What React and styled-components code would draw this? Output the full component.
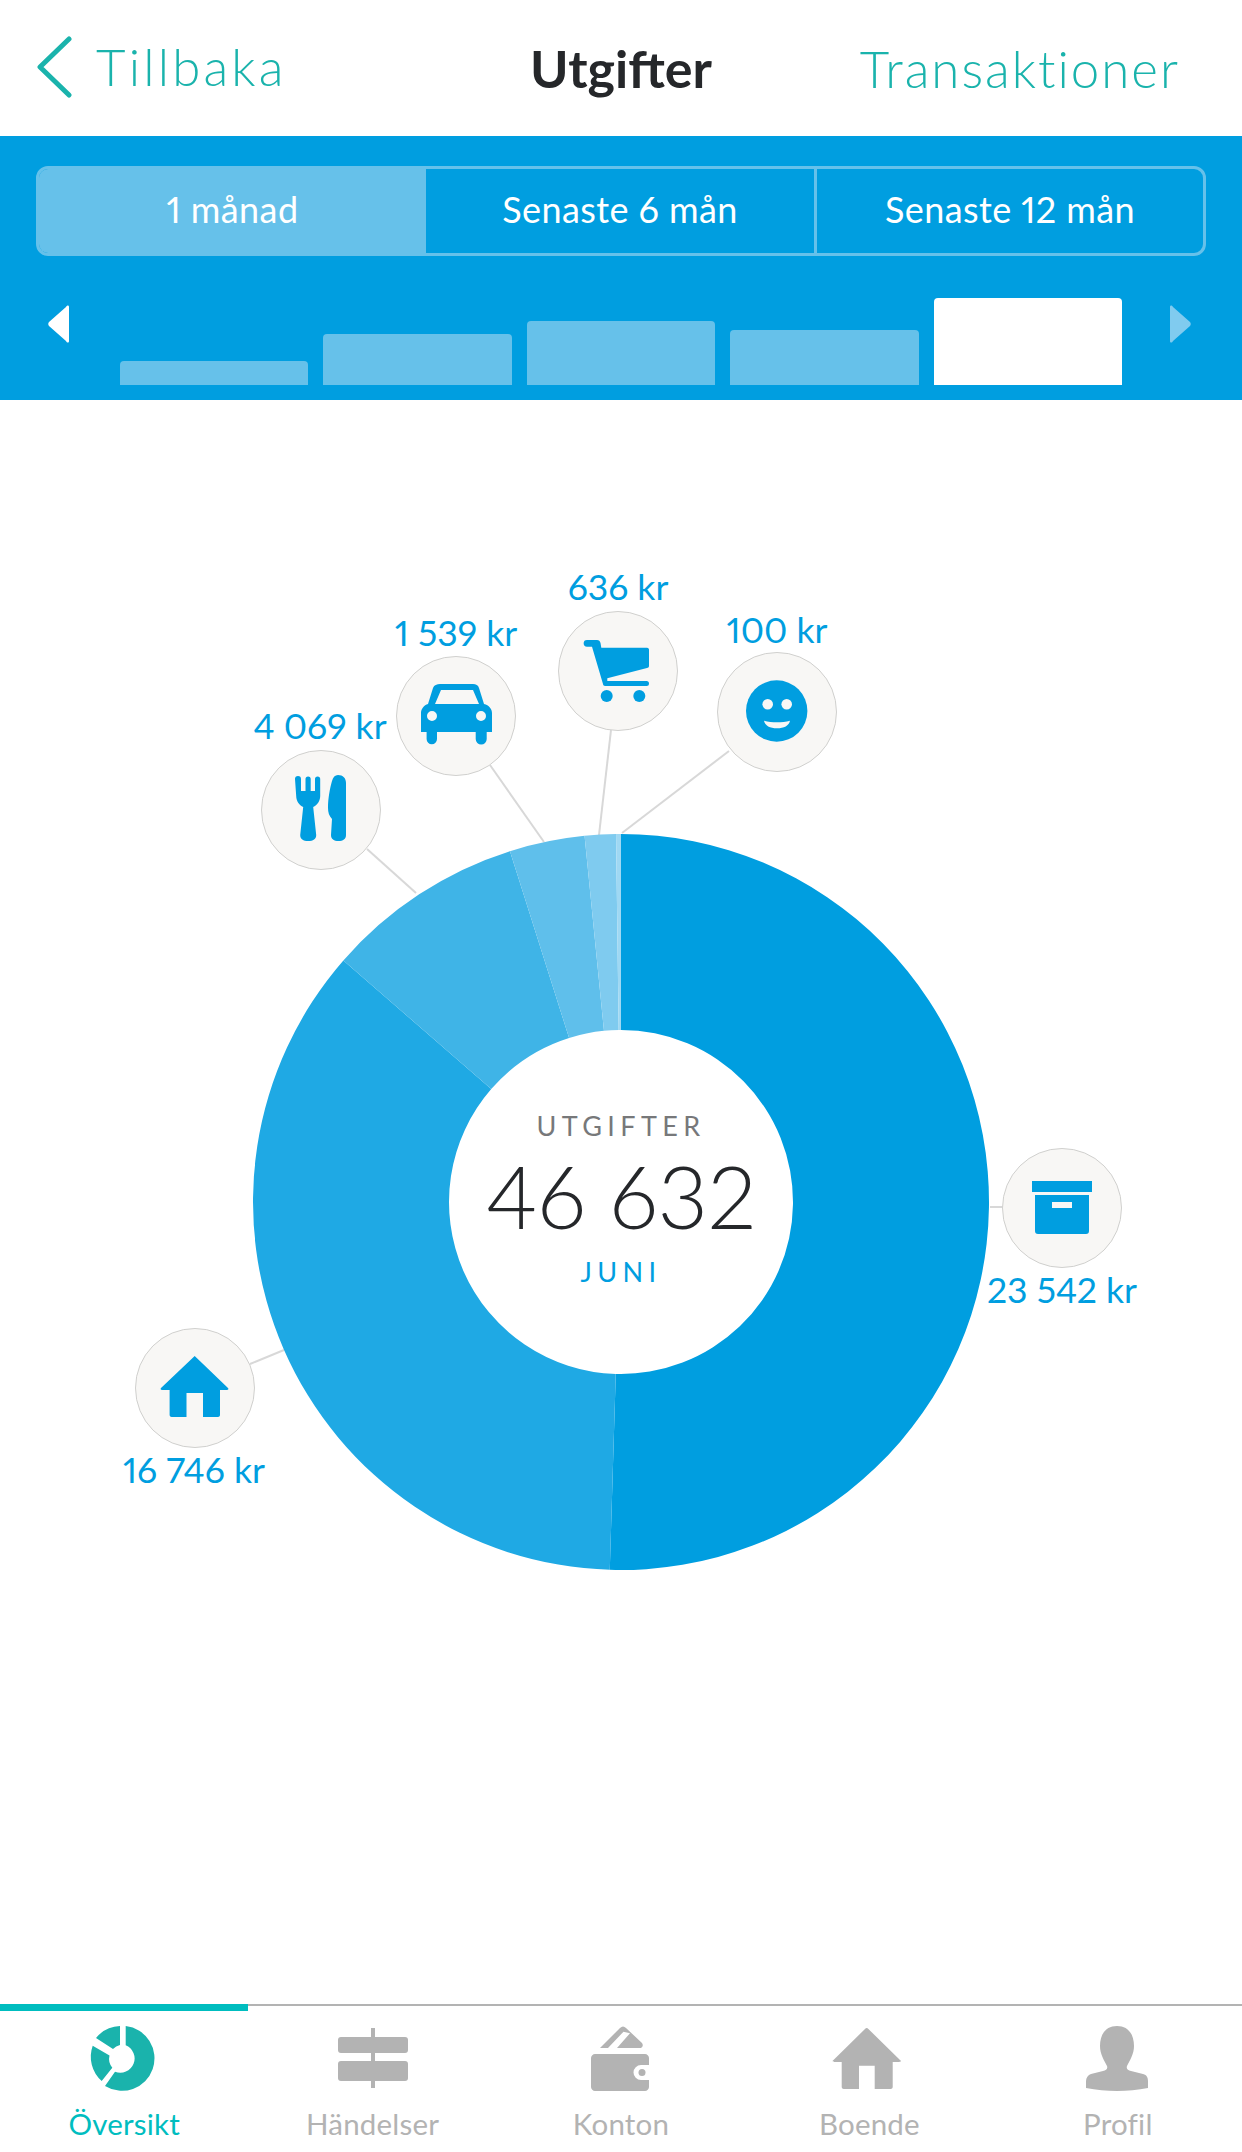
import React from "react";
import styled, { createGlobalStyle } from "styled-components";

const BLUE = "#009ee0";
const TEAL = "#1ab3ac";
const GREY = "#b3b3b3";
const FONT = `Lato, "Open Sans", sans-serif`;

const GlobalStyle = createGlobalStyle`
  html, body { margin: 0; padding: 0; background: #fff; }
  body { font-family: ${FONT}; font-variant-numeric: proportional-nums; }
`;

const Page = styled.div`
  width: 1242px;
  height: 2152px;
  display: flex;
  flex-direction: column;
  overflow: hidden;
  background: #fff;
`;

const Header = styled.header`
  height: 136px;
  display: grid;
  grid-template-columns: 1fr auto 1fr;
  align-items: center;
  padding: 0 36px;
  box-sizing: border-box;
`;
const Back = styled.div`
  display: flex;
  align-items: center;
  gap: 24px;
  color: ${TEAL};
  font-size: 51px;
  font-weight: 300;
  letter-spacing: 3.2px;
  line-height: 60px;
  padding-bottom: 2px;
`;
const Title = styled.div`
  font-size: 52px;
  font-weight: 700;
  color: #25272a;
`;
const HeaderLink = styled.div`
  justify-self: end;
  margin-right: 26px;
  color: ${TEAL};
  font-size: 51px;
  font-weight: 300;
  letter-spacing: 2px;
`;

const Band = styled.section`
  height: 264px;
  background: ${BLUE};
  padding: 30px 36px 15px;
  box-sizing: border-box;
  display: flex;
  flex-direction: column;
  justify-content: space-between;
`;
const Segments = styled.div`
  display: grid;
  grid-template-columns: 387px 388px 1fr;
  height: 90px;
  border: 3px solid #66c1ea;
  border-radius: 12px;
  overflow: hidden;
  box-sizing: border-box;
`;
const Segment = styled.div`
  display: flex;
  align-items: center;
  justify-content: center;
  padding-bottom: 5px;
  color: #fff;
  font-size: 36px;
  letter-spacing: 0.4px;
  background: ${(p) => (p.$active ? "#66c1ea" : "transparent")};
  border-left: ${(p) => (p.$divider ? "3px solid #66c1ea" : "0")};
`;
const BarRow = styled.div`
  display: flex;
  align-items: flex-end;
  height: 87px;
  margin: 0 -36px;
  padding: 0 51px 0 48px;
  justify-content: space-between;
`;
const Arrow = styled.svg`
  width: 21px;
  height: 38px;
  align-self: flex-start;
  margin-top: 7px;
`;
const Bars = styled.div`
  display: flex;
  align-items: flex-end;
  gap: 15px;
  margin-left: 3px;
`;
const Bar = styled.div`
  width: 188.4px;
  border-radius: 4px 4px 0 0;
  background: ${(p) => (p.$active ? "#fff" : "#66c1ea")};
`;

const Chart = styled.main`
  position: relative;
  flex: 1;
`;
const ChartArt = styled.svg`
  position: absolute;
  inset: 0;
  width: 1242px;
  height: 1604px;
`;
const Centre = styled.div`
  position: absolute;
  left: 450px;
  top: 630px;
  width: 342px;
  height: 343px;
  display: flex;
  flex-direction: column;
  align-items: center;
`;
const CentreLabel = styled.div`
  margin-top: 80px;
  font-size: 27px;
  letter-spacing: 5.4px;
  color: #77787a;
  line-height: 32px;
`;
const CentreValue = styled.div`
  font-size: 87px;
  font-weight: 300;
  color: #25272a;
  line-height: 96px;
  margin-top: 6px;
`;
const CentreMonth = styled.div`
  font-size: 27px;
  letter-spacing: 5.4px;
  color: ${BLUE};
  line-height: 32px;
  margin-top: 12px;
`;

const Bubble = styled.div`
  position: absolute;
  left: ${(p) => p.$x - 60}px;
  top: ${(p) => p.$y - 60}px;
  width: 120px;
  height: 120px;
  box-sizing: border-box;
  border-radius: 50%;
  border: 1.5px solid #d0d0ce;
  background: #f8f7f5;
  display: flex;
  align-items: center;
  justify-content: center;
`;
const Amount = styled.div`
  position: absolute;
  left: ${(p) => p.$x - 120}px;
  top: ${(p) => p.$y - 22}px;
  width: 240px;
  text-align: center;
  font-size: 35.5px;
  line-height: 44px;
  color: ${BLUE};
  white-space: nowrap;
`;

const TabBar = styled.nav`
  height: 148px;
  border-top: 2px solid ${GREY};
  display: grid;
  grid-template-columns: repeat(5, 1fr);
  box-sizing: border-box;
`;
const Tab = styled.div`
  display: flex;
  flex-direction: column;
  align-items: center;
  margin-top: -2px;
  padding-top: 21px;
  position: relative;
  color: ${(p) => (p.$active ? "#00bdbf" : GREY)};
  font-size: 29.5px;
  letter-spacing: 0.2px;
  &::before {
    content: "";
    position: absolute;
    left: 0;
    right: 0;
    top: 0;
    height: ${(p) => (p.$active ? "7px" : "0")};
    background: #00bdbf;
  }
`;
const TabIcon = styled.svg`
  width: 80px;
  height: 68px;
  display: block;
`;
const TabLabel = styled.div`
  margin-top: 13px;
  line-height: 36px;
`;
const BubbleIcon = styled.svg`
  width: 80px;
  height: 80px;
  display: block;
`;

const polar = (r, a) => {
  const rad = ((a - 90) * Math.PI) / 180;
  return [621 + r * Math.cos(rad), 802 + r * Math.sin(rad)];
};

const slice = (from, to) => {
  const [x1, y1] = polar(368, from);
  const [x2, y2] = polar(368, to);
  const [x3, y3] = polar(172, to);
  const [x4, y4] = polar(172, from);
  const big = to - from > 180 ? 1 : 0;
  return `M${x1} ${y1}A368 368 0 ${big} 1 ${x2} ${y2}L${x3} ${y3}A172 172 0 ${big} 0 ${x4} ${y4}Z`;
};

const values = [
  [23542, "#009ee0"],
  [16746, "#1fa9e4"],
  [4069, "#3fb4e7"],
  [1539, "#5fbfeb"],
  [636, "#7fcbef"],
  [100, "#9fd8f3"],
];
const total = 46632;

const leaders = [
  [367, 449, 416, 493],
  [490, 365, 544, 442],
  [611, 330, 599, 435],
  [729, 351, 622, 433],
  [990, 807, 1003, 807],
  [250, 964, 284, 950],
];

const Fork = () => (
  <BubbleIcon viewBox="0 0 80 80" fill={BLUE}>
    <path d="M14 9a3 3 0 0 1 6 0V21h4.500V9a2.600 2.600 0 0 1 5.200 0V21H34V9a2.600 2.600 0 0 1 5.200 0V26c0 5-3 9-7 11l3 28c0 4-3 6-8 6s-8-2-8-6l3-28c-4-2-7-6-7-11z" />
    <path d="M57 5c5 0 8 3 8 8V65c0 4-3 6-7.500 6S50 69 50 65l1-16c-3-3-4-7-4-11 0-10 2-20 4-27 1-4 3-6 6-6z" />
  </BubbleIcon>
);
const Car = () => (
  <BubbleIcon viewBox="0 0 80 80" fill={BLUE} fillRule="evenodd">
    <path d="M24 8H57c3 0 5 1 6 4l5 16c5 1 8 5 8 9V56H70.700V63a5.500 5.500 0 0 1-11 0V56H21V63a5.200 5.200 0 0 1-10.400 0V56H5V37c0-4 3-8 7-9l5-16c1-3 4-4 7-4zM25 14l-6 14H63L57 14zM16 35a5 5 0 1 0 0 10 5 5 0 0 0 0-10zM65 35a5 5 0 1 0 0 10 5 5 0 0 0 0-10z" />
  </BubbleIcon>
);
const Cart = () => (
  <BubbleIcon viewBox="0 0 80 80" fill={BLUE}>
    <path d="M9 9H19c2 0 3 1 3.500 3l.8 4.700H69c1.500 0 2 1 2 2V35c0 1-1 2-2 2L29.300 47.300V50H68.500a2.500 2.500 0 0 1 0 5H27c-1 0-2-1-2-2L14 15.700H9a3.300 3.300 0 0 1 0-6.700z" />
    <circle cx="28.700" cy="65" r="6" />
    <circle cx="61.300" cy="65" r="6" />
  </BubbleIcon>
);
const Smile = () => (
  <BubbleIcon viewBox="0 0 80 80">
    <circle cx="39.700" cy="39" r="30.700" fill={BLUE} />
    <circle cx="30.700" cy="32.300" r="5.300" fill="#f8f7f5" />
    <circle cx="49.700" cy="32.300" r="5.300" fill="#f8f7f5" />
    <path d="M27 48.700c8 2 18 2 26 0-1 5-6 7.600-13 7.600s-12-2.600-13-7.600z" fill="#f8f7f5" />
  </BubbleIcon>
);
const Box = () => (
  <BubbleIcon viewBox="0 0 80 80" fill={BLUE} fillRule="evenodd">
    <path d="M10 13h60v11H10zM13 27h54v36c0 2-1 3-3 3H16c-2 0-3-1-3-3zm17 7v6h20v-6z" />
  </BubbleIcon>
);
const House = () => (
  <BubbleIcon viewBox="0 0 80 80" fill={BLUE}>
    <path d="M39.700 8 73 40c1 1 0 2-1 2H65V67c0 1-1 2-2 2H48V45H31.500V69H16.600c-1 0-2-1-2-2V42H7c-1 0-2-1-1-2z" />
  </BubbleIcon>
);

const bubbles = [
  { x: 321, y: 410, icon: <Fork /> },
  { x: 456, y: 316, icon: <Car /> },
  { x: 618, y: 271, icon: <Cart /> },
  { x: 777, y: 312, icon: <Smile /> },
  { x: 1062, y: 808, icon: <Box /> },
  { x: 195, y: 988, icon: <House /> },
];
const amounts = [
  { x: 320, y: 326, text: "4 069 kr" },
  { x: 456, y: 233, text: "1 539 kr" },
  { x: 618, y: 187, text: "636 kr" },
  { x: 777, y: 230, text: "100 kr" },
  { x: 1062, y: 890, text: "23 542 kr" },
  { x: 194, y: 1070, text: "16 746 kr" },
];

export default function App() {
  let angle = 0;
  const slices = values.map(([value, color]) => {
    const from = angle;
    angle += (value / total) * 360;
    return <path key={value} d={slice(from, angle)} fill={color} />;
  });

  return (
    <Page>
      <GlobalStyle />
      <Header>
        <Back>
          <svg width="36" height="62" viewBox="0 0 36 62" fill="none">
            <path d="M33 3 4 31l29 28" stroke={TEAL} strokeWidth="5" strokeLinecap="round" strokeLinejoin="round" />
          </svg>
          Tillbaka
        </Back>
        <Title>Utgifter</Title>
        <HeaderLink>Transaktioner</HeaderLink>
      </Header>
      <Band>
        <Segments>
          <Segment $active>1 månad</Segment>
          <Segment>Senaste 6 mån</Segment>
          <Segment $divider>Senaste 12 mån</Segment>
        </Segments>
        <BarRow>
          <Arrow viewBox="0 0 21 38">
            <path d="M21 2v34c0 2-2 2-3 0L1 21c-1-1-1-3 0-4L18 2c1-2 3-2 3 0z" fill="#fff" />
          </Arrow>
          <Bars>
            <Bar style={{ height: 24 }} />
            <Bar style={{ height: 51 }} />
            <Bar style={{ height: 64 }} />
            <Bar style={{ height: 55 }} />
            <Bar $active style={{ height: 87 }} />
          </Bars>
          <Arrow viewBox="0 0 21 38">
            <path d="M0 2v34c0 2 2 2 3 0l17-15c1-1 1-3 0-4L3 2C2 0 0 0 0 2z" fill="#80cbef" />
          </Arrow>
        </BarRow>
      </Band>
      <Chart>
        <ChartArt viewBox="0 0 1242 1604">
          {leaders.map(([x1, y1, x2, y2]) => (
            <line key={x1} x1={x1} y1={y1} x2={x2} y2={y2} stroke="#d8d8d8" strokeWidth="2" />
          ))}
          {slices}
        </ChartArt>
        <Centre>
          <CentreLabel>UTGIFTER</CentreLabel>
          <CentreValue>46 632</CentreValue>
          <CentreMonth>JUNI</CentreMonth>
        </Centre>
        {bubbles.map((b) => (
          <Bubble key={b.x} $x={b.x} $y={b.y}>
            {b.icon}
          </Bubble>
        ))}
        {amounts.map((a) => (
          <Amount key={a.text} $x={a.x} $y={a.y}>
            {a.text}
          </Amount>
        ))}
      </Chart>
      <TabBar>
        <Tab $active>
          <TabIcon viewBox="0 0 80 68" fill={TEAL}>
            <path d="M41.700 1A32.500 32.500 0 1 1 21 61L31 46.700A13.500 13.500 0 1 0 41.700 20.300Z" />
            <path d="M36 1A32.500 32.500 0 0 0 12 13L29 24A14 14 0 0 1 36 20Z" />
            <path d="M8.700 20.700A32.500 32.500 0 0 0 17.700 56L28.300 42.700A14 14 0 0 1 25.500 30.500Z" />
          </TabIcon>
          <TabLabel>Översikt</TabLabel>
        </Tab>
        <Tab>
          <TabIcon viewBox="0 0 80 68" fill={GREY}>
            <rect x="38" y="3" width="4" height="60" />
            <rect x="5" y="12" width="70" height="16" rx="3" />
            <rect x="5" y="36" width="70" height="20" rx="3" />
          </TabIcon>
          <TabLabel>Händelser</TabLabel>
        </Tab>
        <Tab>
          <TabIcon viewBox="0 0 80 68" fill={GREY}>
            <path d="M19 23 39 3Q42 0 45 3L61 18Q63 21 60 23H36L49 8.300 42.500 6.700 27 23Z" />
            <path d="M14 29H64c2 0 4 2 4 4v7H60a7.500 7.500 0 0 0 0 15h8v7c0 2-2 4-4 4H14c-2 0-4-2-4-4V33c0-2 2-4 4-4z" />
            <circle cx="61" cy="47.500" r="3.500" />
          </TabIcon>
          <TabLabel>Konton</TabLabel>
        </Tab>
        <Tab>
          <TabIcon viewBox="0 0 80 68" fill={GREY}>
            <path d="M36 4Q37.700 2 39.400 4L71 35c1.500 1 1 2-1 2H63.700V62c0 1-1 2-2 2H45.700V40.700H30V64H14.700c-1 0-2-1-2-2V37H5.500c-2 0-2.500-1-1-2z" />
          </TabIcon>
          <TabLabel>Boende</TabLabel>
        </Tab>
        <Tab>
          <TabIcon viewBox="0 0 80 68" fill={GREY}>
            <path d="M39 1C50 1 56 9 56 21 56 29 52 35 49 41 48 44 50 45 53 46L65 49C69 50 70 53 70 56V63C60 65 49 66 39 66 29 66 18 65 8 63V56C8 53 10 50 13 49L25 46C28 45 30 44 29 41 26 35 22 29 22 21 22 9 28 1 39 1Z" />
          </TabIcon>
          <TabLabel>Profil</TabLabel>
        </Tab>
      </TabBar>
    </Page>
  );
}
